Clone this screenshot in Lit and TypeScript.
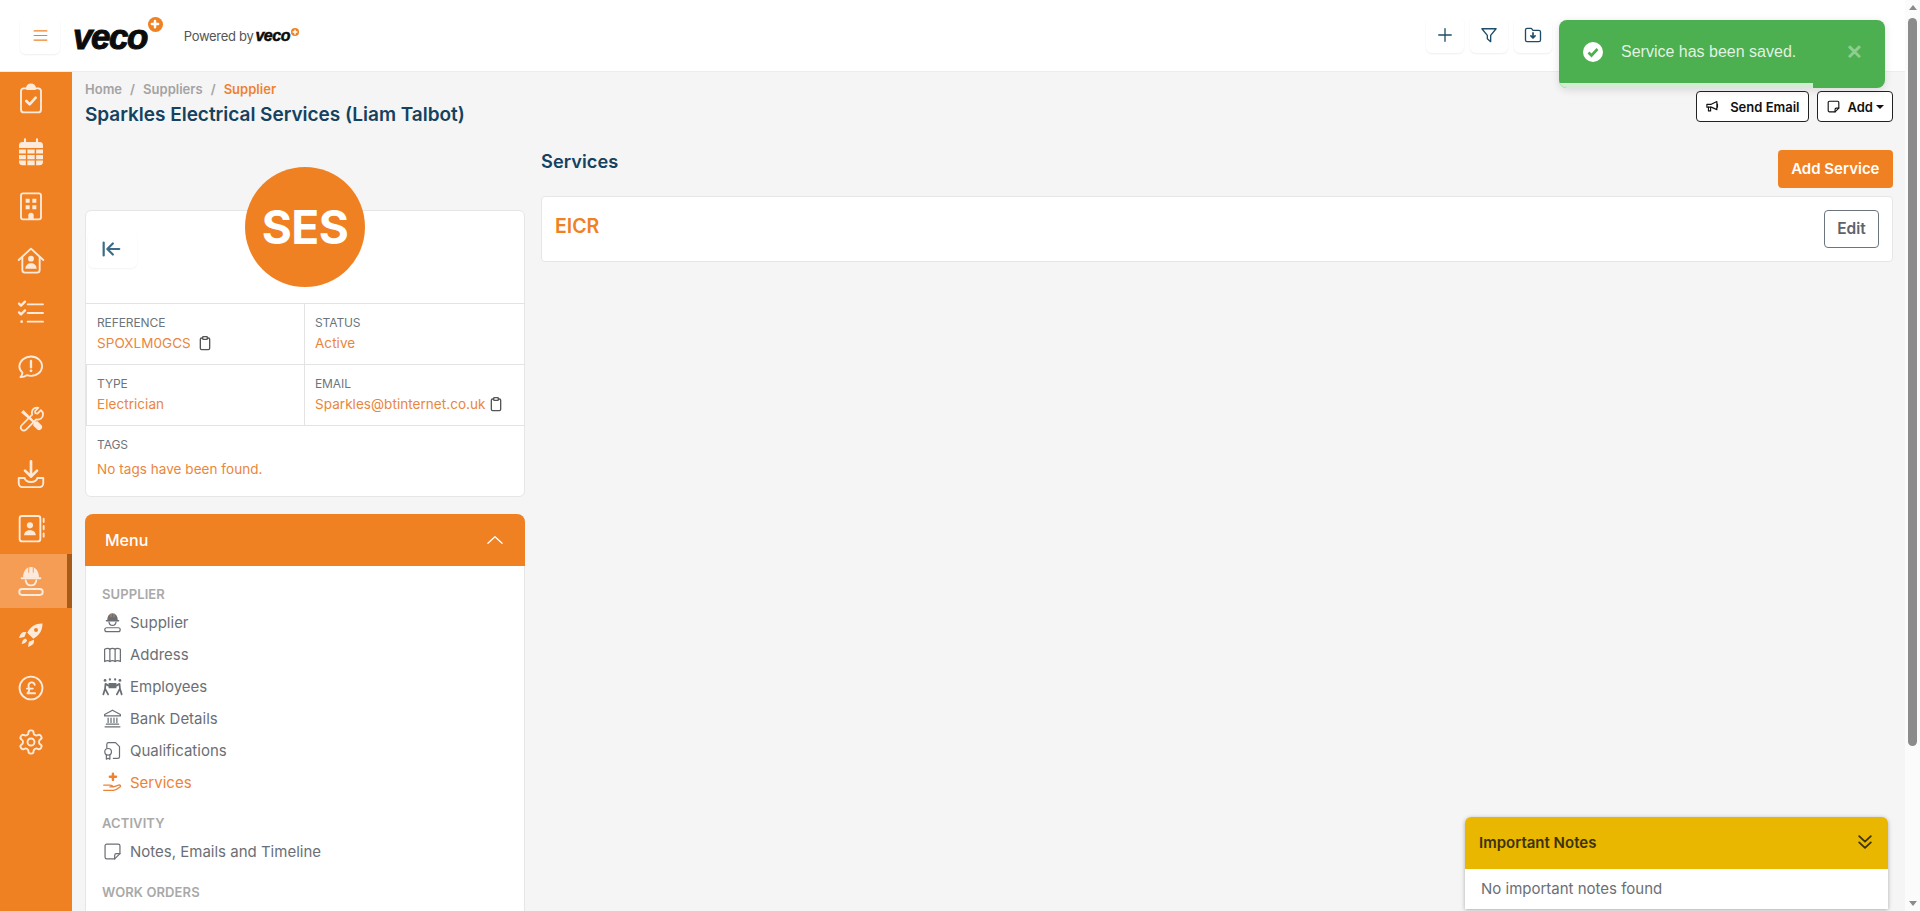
import { LitElement, css, html, svg } from 'lit';
import { customElement } from 'lit/decorators.js';

// all icons share a 24x24 box, colour and stroke width come from the css
const icons: Record<string, unknown> = {
  clipboard: svg`<rect x="4.5" y="4" width="15" height="18" rx="2.2"/><path d="M9 4.5V4a3 3 0 0 1 6 0v.5z" fill="currentColor"/><path d="M8.5 13.5l2.5 2.5 4.5-5" stroke-width="2"/>`,
  calendar: svg`<rect x="3" y="4.5" width="18" height="17.5" rx="2.6" fill="currentColor" stroke="none"/><path d="M7.5 2.5v3M16.5 2.5v3" stroke-width="1.6"/><path d="M3 9.5h18M3 13.7h18M3 17.9h18M8.7 9.5v12.500M15.3 9.500v12.500" stroke="#f08122" stroke-width="1.1"/>`,
  building: svg`<rect x="4.5" y="2.5" width="15" height="19.5" rx="1.6"/><path d="M8 6.5h3v3H8zM13 6.5h3v3h-3zM8 11.500h3v3H8zM13 11.500h3v3h-3z" fill="currentColor" stroke="none"/><path d="M10 22v-3a2 2 0 0 1 4 0v3" fill="currentColor" stroke="none"/>`,
  house: svg`<path d="M2.800 12L12 3.500l9.200 8.500"/><path d="M5.500 10v9.500a2 2 0 0 0 2 2h9a2 2 0 0 0 2-2V10"/><circle cx="12" cy="11" r="2.200" fill="currentColor" stroke="none"/><path d="M7.800 18.500c0-2.500 1.900-4 4.200-4s4.200 1.500 4.200 4z" fill="currentColor" stroke="none"/>`,
  list: svg`<path d="M9.500 5.500H21M9.500 12H21M9.500 18.500H21"/><path d="M3 5l1.500 1.500 3-3M3 11.500L4.500 13l3-3" stroke-width="1.700"/><circle cx="5" cy="18.500" r="1" fill="currentColor" stroke="none"/>`,
  chat: svg`<path d="M12 3c5.300 0 9.500 3.700 9.500 8.300s-4.200 8.300-9.500 8.300c-1.300 0-2.500-.2-3.600-.6-1.400 1-3.100 1.500-5.400 1.700 1-1.200 1.600-2.500 1.700-3.900-1.700-1.500-2.700-3.400-2.700-5.500C2.500 6.700 6.700 3 12 3z"/><path d="M12 6.800v5.400" stroke-width="2"/><circle cx="12" cy="15.300" r="1.200" fill="currentColor" stroke="none"/>`,
  tools: svg`<path d="M3.500 5.500l2-2 9.800 9.800 2.200-.2 3.500 3.500c.8.800.8 2.100 0 3l-.6.600c-.9.800-2.200.8-3 0l-3.500-3.500.2-2.200z" fill="currentColor" stroke="none"/><path d="M20.500 3.600l-3 3-1.700-.4-.4-1.700 3-3c-2.600-.7-5.200.9-5.600 3.500-.1.800 0 1.600.2 2.300L4 16.500c-1.100 1.100-1.100 2.800 0 3.800 1 1.100 2.700 1.100 3.800 0l8.700-8.900c2.900.9 5.800-1.100 5.800-4.200 0-1.500-.6-2.800-1.800-3.600z" stroke-width="1.500"/>`,
  download: svg`<path d="M12 2.500V14M7.500 9.500L12 14l4.500-4.500" stroke-width="2"/><path d="M2.800 15h4.400c.5 2 2.400 3 4.800 3s4.300-1 4.800-3h4.400v4a2.800 2.800 0 0 1-2.800 2.800H5.600A2.800 2.800 0 0 1 2.800 19z"/>`,
  addressbook: svg`<rect x="3.500" y="3" width="15.500" height="19" rx="1.800"/><circle cx="11.200" cy="10" r="2.300" fill="currentColor" stroke="none"/><path d="M6.800 17.500c0-2.400 2-3.800 4.400-3.800s4.400 1.400 4.400 3.800z" fill="currentColor" stroke="none"/><path d="M21.500 5v2.500M21.500 10.500V13M21.500 16v2.500"/>`,
  worker: svg`<path d="M6 9.500C6 5 8.300 1.500 12 1.500s6 3.500 6 8z" fill="currentColor" stroke="none"/><path d="M10.300 2v3.500M13.700 2v3.500" stroke="#f59c55" stroke-width=".7"/><path d="M5 10h14" stroke-width="1.500"/><path d="M8 11.500c.4 2.400 1.900 3.800 4 3.800s3.600-1.400 4-3.800"/><rect x="3.200" y="18" width="17.600" height="4.500" rx="2.200"/>`,
  rocket: svg`<path d="M21.800 2.200c-5.500-.2-10 2.400-13 7.800l5.200 5.200c5.400-3 8-7.500 7.800-13z" fill="currentColor" stroke="none"/><path d="M8 9.500H5.500C3.800 10 2.500 11.800 1.800 14.500L6.300 13.800zM14.500 16v2.500c-.5 1.700-2.300 3-5 3.700l.7-4.500z" fill="currentColor" stroke="none"/><path d="M7.200 15c-1.700.6-2.800 2-3.200 4.700 2.700-.4 4.100-1.500 4.700-3.200z" fill="currentColor" stroke="none"/><circle cx="16.300" cy="7.700" r="1.700" fill="#f08122" stroke="none"/>`,
  pound: svg`<circle cx="12" cy="12" r="9.800"/><path d="M15.200 9.200a2.700 2.700 0 0 0-5.300.6c0 1.500.6 2.500.6 3.800 0 1.200-.6 2-1.500 2.900h6.500M8.500 12.500h5"/>`,
  gear: svg`<path d="M12.220 2h-.44a2 2 0 0 0-2 2v.18a2 2 0 0 1-1 1.730l-.43.250a2 2 0 0 1-2 0l-.15-.080a2 2 0 0 0-2.730.730l-.22.380a2 2 0 0 0 .730 2.730l.15.100a2 2 0 0 1 1 1.720v.510a2 2 0 0 1-1 1.740l-.15.090a2 2 0 0 0-.730 2.730l.22.380a2 2 0 0 0 2.730.730l.15-.080a2 2 0 0 1 2 0l.43.250a2 2 0 0 1 1 1.730V20a2 2 0 0 0 2 2h.44a2 2 0 0 0 2-2v-.18a2 2 0 0 1 1-1.730l.43-.25a2 2 0 0 1 2 0l.15.080a2 2 0 0 0 2.730-.730l.22-.390a2 2 0 0 0-.730-2.730l-.15-.080a2 2 0 0 1-1-1.740v-.5a2 2 0 0 1 1-1.740l.15-.090a2 2 0 0 0 .730-2.730l-.22-.380a2 2 0 0 0-2.730-.730l-.15.080a2 2 0 0 1-2 0l-.43-.25a2 2 0 0 1-1-1.730V4a2 2 0 0 0-2-2z"/><circle cx="12" cy="12" r="3"/>`,
  map: svg`<path d="M3 6c2.500-1.500 4.500-1.500 6 0 1.500-1.500 4.500-1.500 6 0 1.500-1.500 3.500-1.500 6 0v14c-2.500-1.500-4.500-1.500-6 0-1.500-1.500-4.500-1.500-6 0-1.500-1.500-3.500-1.500-6 0z"/><path d="M9 6v14M15 6v14"/>`,
  people: svg`<circle cx="3.500" cy="5" r="1.600" fill="currentColor" stroke="none"/><circle cx="20.500" cy="5" r="1.600" fill="currentColor" stroke="none"/><circle cx="9" cy="4" r="1.300" fill="currentColor" stroke="none"/><circle cx="15" cy="4" r="1.300" fill="currentColor" stroke="none"/><path d="M7.500 8h9v6h-9z" fill="currentColor" stroke="none"/><path d="M1.500 21l2-6.500L4 9l3.500 2M22.500 21l-2-6.500L20 9l-3.500 2M3.500 14.500L7 21M20.500 14.500L17 21" stroke-width="2"/>`,
  bank: svg`<path d="M12 2.500L3 7.500v1.500h18V7.500z"/><path d="M3.500 21.500h17M5 18.500h14M7 11.500v5M10.300 11.500v5M13.700 11.500v5M17 11.500v5"/>`,
  cert: svg`<path d="M8 3h7.500L20 7.500V19a2 2 0 0 1-2 2h-5M5.500 9V5a2 2 0 0 1 2-2"/><circle cx="7" cy="13.500" r="3.800"/><path d="M5 17v5l2-1.200L9 22v-5"/>`,
  service: svg`<path d="M12.500 2v7M9 5.500h7" stroke-width="2.800"/><path d="M2 15h7c2.500 0 3.500 1 4.500 2H9M13 17l6-2c2-.5 3 1 1.500 2.200-2 1.700-4.500 3.300-7.500 3.800H2" stroke-width="1.500"/>`,
  note: svg`<path d="M5.500 3.500h13a2 2 0 0 1 2 2v9l-6 6h-9a2 2 0 0 1-2-2v-13a2 2 0 0 1 2-2z"/><path d="M20.500 14.500h-4a2 2 0 0 0-2 2v4"/>`,
  copy: svg`<path d="M8.500 4.500H7A2 2 0 0 0 5 6.500V20a2 2 0 0 0 2 2h10a2 2 0 0 0 2-2V6.500a2 2 0 0 0-2-2h-1.500" stroke-width="2"/><rect x="8.500" y="2.500" width="7" height="4" rx="1" stroke-width="2"/>`,
  back: svg`<path d="M4 5v14M21 12H8M14 6l-6 6 6 6" stroke-width="2.400"/>`,
  plus: svg`<path d="M12 4.500v15M4.500 12h15"/>`,
  filter: svg`<path d="M3.500 4.500h17l-6.500 8v7.500l-4-3.500v-4z"/>`,
  folder: svg`<path d="M3 6a2 2 0 0 1 2-2h5l2 2.500h7a2 2 0 0 1 2 2V18a2 2 0 0 1-2 2H5a2 2 0 0 1-2-2z"/><path d="M12 9.500v6M9.500 13l2.500 2.500 2.500-2.500" stroke-width="2"/>`,
  megaphone: svg`<path d="M3 8.500h7L19 4v13l-9-4H3z"/><path d="M5.500 13v6h3.500v-6M20 8v5"/>`,
  menu: svg`<path d="M3 5.500h18M3 12h18M3 18.500h18"/>`,
  up: svg`<path d="M3.500 16L12 8l8.500 8"/>`,
  doubledown: svg`<path d="M5 5l7 6.500L19 5M5 12.500l7 6.500 7-6.500" stroke-width="2.200"/>`,
};

const icon = (name: string, cls = '') => html`<svg class="icon ${cls}" viewBox="0 0 24 24" fill="none" stroke="currentColor" stroke-linecap="round" stroke-linejoin="round">${icons[name]}</svg>`;

const railItems = ['clipboard', 'calendar', 'building', 'house', 'list', 'chat', 'tools', 'download', 'addressbook', 'worker', 'rocket', 'pound', 'gear'];
// these glyphs fill their box, so they get a smaller one in the rail
const railSmall = ['chat', 'tools', 'rocket', 'pound', 'gear'];

const menuGroups = [
  {
    title: 'SUPPLIER',
    items: [
      { icon: 'worker', label: 'Supplier' },
      { icon: 'map', label: 'Address' },
      { icon: 'people', label: 'Employees' },
      { icon: 'bank', label: 'Bank Details' },
      { icon: 'cert', label: 'Qualifications' },
      { icon: 'service', label: 'Services', active: true },
    ],
  },
  { title: 'ACTIVITY', items: [{ icon: 'note', label: 'Notes, Emails and Timeline' }] },
  { title: 'WORK ORDERS', items: [] },
];

@customElement('app-root')
export class AppRoot extends LitElement {
  static styles = css`
    :host {
      display: flex;
      position: relative;
      width: 1920px;
      height: 911px;
      overflow: hidden;
      font-family: Inter, "Noto Sans", sans-serif;
      background: #f5f5f5;
      color: #6b6f75;
    }
    .icon { width: 24px; height: 24px; stroke-width: 1.6; flex: none; display: block; }

    .page { flex: 1; min-width: 0; display: flex; flex-direction: column; }

    /* top bar */
    .topbar {
      height: 72px;
      flex: none;
      box-sizing: border-box;
      background: #fff;
      border-bottom: 1px solid #ececec;
      display: flex;
      align-items: center;
      padding: 0 20px;
    }
    .tool {
      display: flex;
      align-items: center;
      justify-content: center;
      background: #fff;
      border-radius: 6px;
      box-shadow: 0 1px 2px rgba(0, 0, 0, .07);
      color: #1f4d68;
    }
    .burger { width: 40px; height: 37px; margin-bottom: 1px; color: #f08122; }
    .burger .icon { width: 17px; height: 17px; stroke-width: 1.7; }
    .logo {
      font-family: "Liberation Sans", sans-serif;
      font-weight: 700;
      font-style: italic;
      color: #0c0c0c;
      display: flex;
      align-items: flex-start;
      -webkit-text-stroke: 1px #0c0c0c;
    }
    .logo.big { font-size: 35px; letter-spacing: -1.5px; line-height: 46px; margin-left: 13px; margin-top: 2px; }
    .logo.small { font-size: 16px; letter-spacing: -.5px; line-height: 20px; margin-left: 2px; -webkit-text-stroke: .5px #0c0c0c; }
    .dot { background: #f08122; border-radius: 50%; color: #fff; display: flex; align-items: center; justify-content: center; flex: none; }
    .big .dot { width: 15px; height: 15px; margin: 3px 0 0 1px; }
    .big .dot .icon { width: 10px; height: 10px; stroke-width: 6; }
    .small .dot { width: 8px; height: 8px; margin: 2px 0 0 1px; }
    .small .dot .icon { width: 6px; height: 6px; stroke-width: 6; }
    .powered { display: flex; align-items: center; margin-left: 21px; font-size: 13px; color: #555; letter-spacing: -.3px; }
    .tools { margin-left: auto; display: flex; gap: 6px; padding-right: 333px; padding-bottom: 1px; }
    .tools .tool { width: 38px; height: 36px; }
    .tools .icon { width: 20px; height: 20px; }

    .body { flex: 1; min-height: 0; display: flex; }

    /* orange rail */
    .rail { width: 72px; flex: none; background: #f08122; color: #fdeadb; }
    .rail-item { height: 53.6px; display: flex; align-items: center; padding-left: 15px; box-sizing: border-box; }
    .rail-item .icon { width: 32px; height: 32px; stroke-width: 1.4; }
    .rail-item .icon.sm { width: 28px; height: 28px; margin-left: 2px; stroke-width: 1.6; }
    .rail-item.active { background: #f59c55; border-right: 5px solid #a85a17; }

    .main { flex: 1; min-width: 0; padding: 8px 12px 0 13px; display: flex; flex-direction: column; }
    .head { display: flex; justify-content: space-between; }
    .crumbs { display: flex; gap: 8px; font-size: 13px; line-height: 18px; font-weight: 600; color: #a3a3a3; letter-spacing: .02px; }
    .crumbs .on { color: #ee8234; }
    h1 { margin: 4px 0 0; font-size: 19px; line-height: 26px; font-weight: 600; color: #14425f; letter-spacing: -.02px; }
    .actions { display: flex; gap: 8px; margin-top: 11px; align-self: flex-start; }
    .outline {
      display: flex;
      align-items: center;
      box-sizing: border-box;
      height: 31px;
      background: #fff;
      border: 1px solid #222;
      border-radius: 4px;
      padding: 0 8px;
      font-size: 13px;
      font-weight: 600;
      color: #111;
    }
    .outline .icon { width: 15px; height: 15px; stroke-width: 1.8; }
    .outline .gap { margin-right: 10px; }
    .outline .gap-s { margin-right: 7px; }
    .caret { width: 0; height: 0; border: 4px solid transparent; border-top-color: #111; border-bottom: 0; margin-left: 3px; }

    .columns { display: flex; gap: 16px; margin-top: 22px; flex: 1; min-height: 0; }
    .left { width: 440px; flex: none; padding-top: 60px; box-sizing: border-box; }
    .right { flex: 1; min-width: 0; }

    /* supplier summary */
    .summary { position: relative; background: #fff; border: 1px solid #e6e6e6; border-radius: 6px; }
    .avatar {
      position: absolute;
      top: -44px;
      left: 50%;
      transform: translateX(-50%);
      width: 120px;
      height: 120px;
      border-radius: 50%;
      background: #f08122;
      color: #fff;
      font-size: 46px;
      font-weight: 700;
      letter-spacing: -.5px;
      display: flex;
      align-items: center;
      justify-content: center;
    }
    .summary-top { height: 92px; padding-top: 19px; box-sizing: border-box; }
    .back { width: 49px; height: 38px; box-shadow: 0 1px 2px rgba(0, 0, 0, .05); margin-left: 2px; color: #3b6b88; padding-right: 3px; box-sizing: border-box; }
    .back .icon { width: 22px; height: 22px; }
    .info { display: grid; grid-template-columns: 218px 1fr; }
    .cell { height: 61px; box-sizing: border-box; border-top: 1px solid #e3e3e3; padding: 10px 11px 0; }
    .cell + .cell { border-left: 1px solid #e3e3e3; padding-left: 10px; }
    .cell.wide { grid-column: span 2; height: 71px; border-left: 0; padding-left: 11px; }
    .cap { font-size: 12px; line-height: 17px; color: #6c757d; letter-spacing: -.1px; }
    .val { display: flex; align-items: center; gap: 6px; margin-top: 2px; font-size: 13.5px; line-height: 20px; color: #e9863d; letter-spacing: .05px; }
    .val.tight { gap: 2px; }
    .wide .val { margin-top: 6px; }
    .val .icon { width: 16px; height: 16px; color: #555; stroke-width: 1.7; }

    /* side menu */
    .menu { margin-top: 17px; border-radius: 8px 8px 0 0; background: #fff; border: 1px solid #e6e6e6; border-top: 0; height: 500px; box-sizing: border-box; }
    .menu-head {
      height: 52px;
      margin: 0 -1px;
      background: #f08122;
      border-radius: 8px 8px 0 0;
      color: #fff;
      display: flex;
      align-items: center;
      justify-content: space-between;
      padding: 0 20px;
      font-size: 16px;
      font-weight: 450;
    }
    .menu-head .icon { width: 20px; height: 20px; stroke-width: 1.6; }
    .menu-body { padding: 19px 16px 0; }
    .group + .group { margin-top: 16px; }
    .group-title { font-size: 13px; line-height: 18px; font-weight: 600; color: #a9a9a9; letter-spacing: .1px; margin-bottom: 3px; }
    .entry { display: flex; align-items: center; gap: 7px; height: 32px; font-size: 15px; color: #6b6f75; }
    .entry .icon { width: 21px; height: 21px; stroke-width: 1.4; }
    .entry.active { color: #ee8234; }

    /* services */
    .services-head { display: flex; justify-content: space-between; height: 46px; }
    h2 { margin: 0; font-size: 18.2px; line-height: 22px; font-weight: 600; color: #14425f; letter-spacing: .05px; }
    .primary {
      height: 38px;
      box-sizing: border-box;
      display: flex;
      align-items: center;
      padding: 0 13.5px 1px;
      background: #f08122;
      color: #fff;
      border-radius: 4px;
      font-size: 15px;
      font-weight: 600;
    }
    .service {
      height: 66px;
      box-sizing: border-box;
      background: #fff;
      border: 1px solid #e6e6e6;
      border-radius: 4px;
      display: flex;
      align-items: center;
      justify-content: space-between;
      padding: 0 13px;
    }
    .service-name { font-size: 19.5px; font-weight: 600; color: #f08122; margin-bottom: 6px; }
    .edit {
      height: 38px;
      width: 55px;
      margin-bottom: 1px;
      box-sizing: border-box;
      display: flex;
      align-items: center;
      justify-content: center;
      border: 1px solid #6c757d;
      border-radius: 4px;
      font-size: 15.5px;
      font-weight: 600;
      color: #5e636a;
    }

    /* fake browser scrollbar */
    .scrollbar { width: 15px; flex: none; background: #fbfbfb; display: flex; flex-direction: column; align-items: center; padding: 5px 0; box-sizing: border-box; }
    .arrow { width: 0; height: 0; border: 4.5px solid transparent; }
    .arrow.top { border-bottom: 5px solid #8b8b8b; border-top: 0; }
    .arrow.bottom { border-top: 5px solid #8b8b8b; border-bottom: 0; margin-top: auto; }
    .thumb { width: 9px; height: 728px; margin-top: 8px; background: #8b8b8b; border-radius: 5px; }

    /* overlays */
    .toast {
      position: absolute;
      top: 20px;
      left: 1559px;
      width: 326px;
      height: 68px;
      box-sizing: border-box;
      padding: 0 22px 5px 24px;
      background: #4caf50;
      border-radius: 8px;
      overflow: hidden;
      display: flex;
      align-items: center;
      font-family: "Liberation Sans", Arial, sans-serif;
      font-size: 16px;
      color: rgba(255, 255, 255, .85);
      box-shadow: 0 2px 8px rgba(0, 0, 0, .12);
    }
    .toast-check { width: 20px; height: 20px; flex: none; margin-right: 18px; }
    .toast-close { margin-left: auto; font-weight: 700; font-size: 20px; color: rgba(255, 255, 255, .4); }
    .progress { position: absolute; left: 0; bottom: 0; height: 5px; width: 78%; background: #d2ebd3; }

    .notes {
      position: absolute;
      left: 1465px;
      top: 817px;
      width: 423px;
      background: #fff;
      border-radius: 6px 6px 0 0;
      box-shadow: 0 1px 4px rgba(0, 0, 0, .3);
    }
    .notes-head {
      height: 52px;
      background: #e9b600;
      border-radius: 6px 6px 0 0;
      display: flex;
      align-items: center;
      justify-content: space-between;
      padding: 0 13px 2px 14px;
      box-sizing: border-box;
      font-size: 15px;
      font-weight: 600;
      color: #3d3308;
    }
    .notes-head .icon { width: 20px; height: 20px; }
    .notes-body { height: 40px; display: flex; align-items: center; padding: 0 16px 2px; box-sizing: border-box; font-size: 15px; color: #6b6f75; }
  `;

  private logo(cls: string) {
    return html`<span class="logo ${cls}">veco<span class="dot">${icon('plus')}</span></span>`;
  }

  render() {
    return html`
      <div class="page">
        <header class="topbar">
          <div class="tool burger">${icon('menu')}</div>
          ${this.logo('big')}
          <div class="powered">Powered by ${this.logo('small')}</div>
          <div class="tools">
            <div class="tool">${icon('plus')}</div>
            <div class="tool">${icon('filter')}</div>
            <div class="tool">${icon('folder')}</div>
          </div>
        </header>

        <div class="body">
          <nav class="rail">
            ${railItems.map(name => html`<div class="rail-item ${name === 'worker' ? 'active' : ''}">${icon(name, railSmall.includes(name) ? 'sm' : '')}</div>`)}
          </nav>

          <main class="main">
            <div class="head">
              <div>
                <div class="crumbs"><span>Home</span><span>/</span><span>Suppliers</span><span>/</span><span class="on">Supplier</span></div>
                <h1>Sparkles Electrical Services (Liam Talbot)</h1>
              </div>
              <div class="actions">
                <div class="outline">${icon('megaphone', 'gap')}Send Email</div>
                <div class="outline">${icon('note', 'gap-s')}Add<span class="caret"></span></div>
              </div>
            </div>

            <div class="columns">
              <div class="left">
                <section class="summary">
                  <div class="avatar">SES</div>
                  <div class="summary-top"><div class="tool back">${icon('back')}</div></div>
                  <div class="info">
                    <div class="cell"><div class="cap">REFERENCE</div><div class="val">SPOXLM0GCS ${icon('copy')}</div></div>
                    <div class="cell"><div class="cap">STATUS</div><div class="val">Active</div></div>
                    <div class="cell"><div class="cap">TYPE</div><div class="val">Electrician</div></div>
                    <div class="cell"><div class="cap">EMAIL</div><div class="val tight">Sparkles@btinternet.co.uk ${icon('copy')}</div></div>
                    <div class="cell wide"><div class="cap">TAGS</div><div class="val">No tags have been found.</div></div>
                  </div>
                </section>

                <section class="menu">
                  <div class="menu-head">Menu ${icon('up')}</div>
                  <div class="menu-body">
                    ${menuGroups.map(group => html`
                      <div class="group">
                        <div class="group-title">${group.title}</div>
                        ${group.items.map((item: any) => html`<div class="entry ${item.active ? 'active' : ''}">${icon(item.icon)}${item.label}</div>`)}
                      </div>
                    `)}
                  </div>
                </section>
              </div>

              <div class="right">
                <div class="services-head">
                  <h2>Services</h2>
                  <div class="primary">Add Service</div>
                </div>
                <div class="service">
                  <div class="service-name">EICR</div>
                  <div class="edit">Edit</div>
                </div>
              </div>
            </div>
          </main>
        </div>
      </div>

      <div class="scrollbar">
        <div class="arrow top"></div>
        <div class="thumb"></div>
        <div class="arrow bottom"></div>
      </div>

      <div class="toast">
        <svg class="toast-check" viewBox="0 0 20 20"><circle cx="10" cy="10" r="10" fill="#fff"/><path d="M5.500 10.500l3 3 6-6.500" fill="none" stroke="#4caf50" stroke-width="2.600"/></svg>
        Service has been saved.
        <span class="toast-close">✕</span>
        <div class="progress"></div>
      </div>

      <aside class="notes">
        <div class="notes-head">Important Notes ${icon('doubledown')}</div>
        <div class="notes-body">No important notes found</div>
      </aside>
    `;
  }
}
